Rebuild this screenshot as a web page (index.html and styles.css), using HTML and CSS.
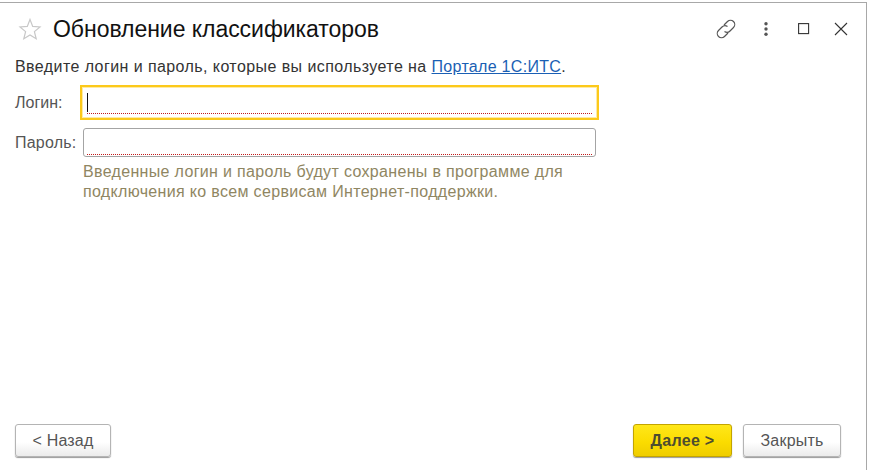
FILE: index.html
```html
<!DOCTYPE html>
<html lang="ru">
<head>
<meta charset="utf-8">
<title>Обновление классификаторов</title>
<link rel="stylesheet" href="styles.css">
</head>
<body>
<main class="window">
  <header class="titlebar">
    <svg class="star" width="24" height="24" viewBox="0 0 24 24"><path d="M12 2.500l2.700 6.900 7.300.5-5.600 4.700 1.800 7.200L12 17.900l-6.200 3.900 1.800-7.200L2 9.900l7.300-.5z" fill="none" stroke="#c8c8c8" stroke-width="1.200"/></svg>
    <h1 class="title">Обновление классификаторов</h1>
    <div class="tools">
      <svg class="tool-link" width="22" height="22" viewBox="0 0 22 22" fill="none" stroke="#555" stroke-width="1.200"><path d="M9 7l3.500-3.500a4.300 4.300 0 0 1 6 0 4.300 4.300 0 0 1 0 6L15 13a4.300 4.300 0 0 1-5.500.5"/><path d="M13 15l-3.500 3.500a4.300 4.300 0 0 1-6 0 4.300 4.300 0 0 1 0-6L7 9a4.300 4.300 0 0 1 5.500-.5"/></svg>
      <svg class="tool-more" width="6" height="16" viewBox="0 0 6 16" fill="#555"><circle cx="3" cy="2.700" r="1.700"/><circle cx="3" cy="8" r="1.700"/><circle cx="3" cy="13.300" r="1.700"/></svg>
      <svg class="tool-max" width="12" height="12" viewBox="0 0 12 12" fill="none" stroke="#333" stroke-width="1.100"><rect x=".6" y=".6" width="10" height="10"/></svg>
      <svg class="tool-close" width="14" height="14" viewBox="0 0 14 14" fill="none" stroke="#333" stroke-width="1.100"><path d="M1 1l12 12M13 1L1 13"/></svg>
    </div>
  </header>
  <section class="content">
    <p class="intro">Введите логин и пароль, которые вы используете на <a class="link" href="#">Портале 1С:ИТС</a>.</p>
    <div class="form">
      <label class="label">Логин:</label>
      <div class="field field-focus"><span class="caret"></span><span class="dots"></span></div>
      <label class="label label-pass">Пароль:</label>
      <div class="field"><span class="dots"></span></div>
      <p class="hint">Введенные логин и пароль будут сохранены в программе для<br>подключения ко всем сервисам Интернет-поддержки.</p>
    </div>
  </section>
  <footer class="actions">
    <button class="btn btn-back" type="button">&lt; Назад</button>
    <span class="spacer"></span>
    <button class="btn btn-next" type="button">Далее &gt;</button>
    <button class="btn btn-close" type="button">Закрыть</button>
  </footer>
</main>
</body>
</html>
```
FILE: styles.css
```css
* { box-sizing: border-box; }
html, body { margin: 0; height: 100%; background: #fff; }
body { font-family: "Liberation Sans", Arial, sans-serif; overflow: hidden; }
.window {
  width: 867px; height: 468px; margin-top: 2px;
  border-top: 1px solid #a8a8a8; border-right: 1px solid #a8a8a8;
  display: flex; flex-direction: column; padding: 0 0 0 15px;
}
.titlebar { display: flex; align-items: center; height: 50px; padding: 2px 18px 0 0; flex: none; }
.star { margin-left: 3px; flex: none; }
.title { margin: 0 0 0 11px; font-size: 23px; letter-spacing: -.04px; font-weight: 400; color: #111; line-height: 26px; }
.tools { margin-left: auto; display: flex; align-items: center; }
.tool-more { margin-left: 26px; }
.tool-max { margin-left: 29px; }
.tool-close { margin-left: 24px; }
.content { flex: 1; padding-right: 10px; }
.intro { margin: 5px 0 0; font-size: 16px; letter-spacing: .42px; line-height: 18px; color: #333; height: 18px; white-space: nowrap; }
.link { color: #1a5fb4; text-decoration: underline; letter-spacing: .3px; }
.form { display: grid; grid-template-columns: 65px 519px; grid-template-rows: 35px 29px auto; row-gap: 8px; margin-top: 9px; }
.label { font-size: 16px; color: #555; line-height: 36px; }
.label-pass { line-height: 29px; letter-spacing: .2px; }
.field { position: relative; height: 29px; width: 513px; margin-left: 3px; border: 1px solid #a4a4a4; border-radius: 3px; background: #fff; }
.field-focus { width: 519px; height: 35px; margin: 0; border: 2px solid #fcc91a; border-radius: 0; box-shadow: inset 0 0 0 1px rgba(252, 205, 28, .4); }
.caret { position: absolute; left: 5px; top: 6px; width: 1px; height: 19px; background: #111; }
.dots { position: absolute; left: 3px; right: 3px; bottom: 1px; height: 1px; background: repeating-linear-gradient(90deg, #c41a1a 0 1px, transparent 1px 2px); }
.field-focus .dots { left: 5px; right: 5px; bottom: 4px; }
.hint { grid-column: 2; margin: -3px 0 0 3px; font-size: 16px; letter-spacing: .33px; line-height: 20px; color: #8f8662; white-space: nowrap; }
.actions { display: flex; align-items: flex-start; height: 46px; padding-right: 25px; flex: none; }
.spacer { flex: 1; }
.btn { height: 33px; font-family: inherit; font-size: 16px; letter-spacing: .2px; border-radius: 3px; border: 1px solid #b4b4b4; color: #555; background: linear-gradient(#fff 55%, #ebebeb); box-shadow: 0 1px 1px #9a9a9a; padding: 0; }
.btn-back { width: 96px; }
.btn-next { width: 99px; font-weight: 700; letter-spacing: .3px; color: #4d4d30; border-color: #c3a400; background: linear-gradient(#ffe71a, #fbdc00 55%, #efcd00); }
.btn-close { width: 98px; margin-left: 11px; }
```
